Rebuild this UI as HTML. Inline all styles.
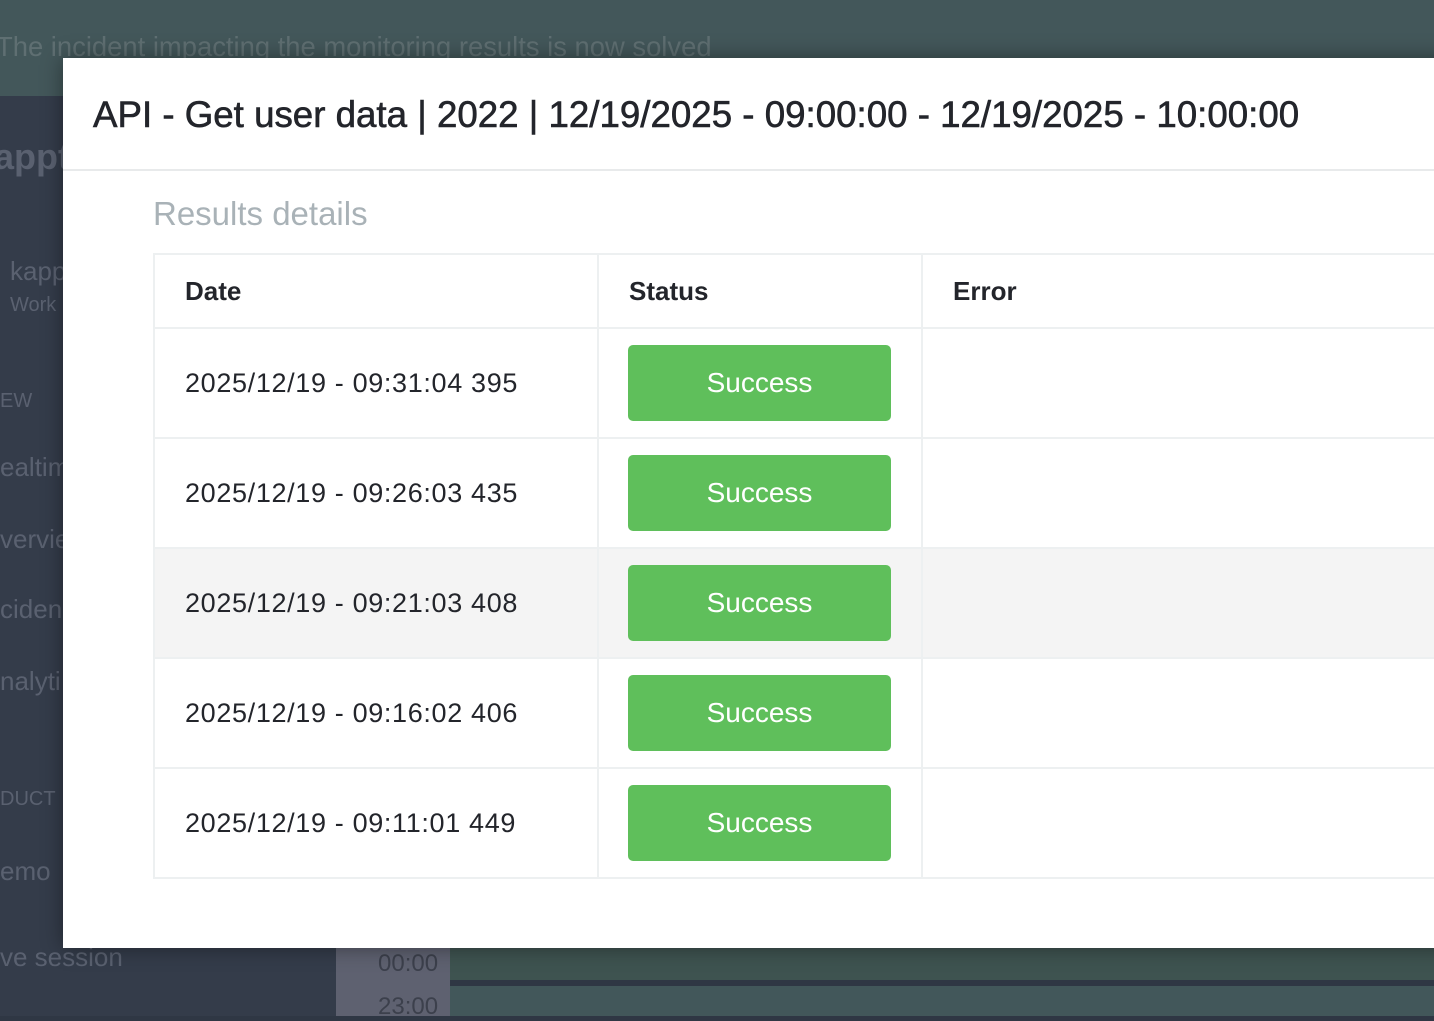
<!DOCTYPE html>
<html><head><meta charset="utf-8"><style>
*{margin:0;padding:0;box-sizing:border-box}
body{width:1434px;height:1016px;overflow:hidden;position:relative;font-family:"Liberation Sans",Arial,sans-serif;background:#2f3744}
.banner{position:absolute;left:0;top:0;width:1434px;height:96px;background:#43575a}
.banner span{position:absolute;left:-4px;top:31px;font-size:27.4px;color:#5f6f72;white-space:nowrap}
.side{position:absolute;left:0;top:96px;width:336px;height:920px;background:#343c4a;color:#5a6170}
.side div{position:absolute;left:0;font-size:26px}
.bot1{position:absolute;left:336px;top:948px;width:114px;height:68px;background:#5e6170}
.bot2{position:absolute;left:450px;top:948px;width:984px;height:32px;background:#3e5350}
.bot3{position:absolute;left:450px;top:986px;width:984px;height:30px;background:#42575a}
.t{position:absolute;left:378px;font-size:24px;color:#3c404c}
.modal{position:absolute;left:63px;top:58px;width:1400px;height:890px;background:#fff;box-shadow:0 0 20px rgba(0,0,0,.4)}
h1{position:absolute;left:30px;top:36px;font-size:36.7px;font-weight:normal;color:#23252b;white-space:nowrap;-webkit-text-stroke:0.6px #23252b}
.hr{position:absolute;left:0;top:111px;width:100%;height:2px;background:#e8eaeb}
.rd{position:absolute;left:90px;top:137px;font-size:33px;color:#a9b2b7;font-weight:300}
table{position:absolute;left:90px;top:195px;border-collapse:collapse;width:1400px}
td,th{border:2px solid #edf0f1;text-align:left;font-size:26px;color:#23252b}
th{height:74px;padding-left:30px;font-weight:bold}
td{height:110px;padding-left:30px;font-size:27px;letter-spacing:0.65px}
tr.g td{background:#f4f4f4}
.btn{width:263px;height:76px;background:#5fbf5b;border-radius:5px;color:#fff;text-align:center;line-height:76px;font-size:28px;letter-spacing:0;margin-left:-1px}
</style></head><body>
<div class="banner"><span>The incident impacting the monitoring results is now solved</span></div>
<div class="side">
<div style="top:40px;font-size:36px;font-weight:bold;left:-6px">appt</div>
<div style="top:160px;left:10px">kapp</div>
<div style="top:198px;left:10px;font-size:20px">Work</div>
<div style="top:294px;font-size:20px">EW</div>
<div style="top:356px">ealtim</div>
<div style="top:428px">vervie</div>
<div style="top:498px">ciden</div>
<div style="top:570px">nalyti</div>
<div style="top:692px;font-size:20px">DUCT</div>
<div style="top:760px">emo</div>
<div style="top:846px">ve session</div>
</div>
<div class="bot1"></div><div class="bot2"></div><div class="bot3"></div>
<div class="t" style="top:950px">00:00</div>
<div class="t" style="top:993px">23:00</div>
<div class="modal">
<h1>API - Get user data | 2022 | 12/19/2025 - 09:00:00 - 12/19/2025 - 10:00:00</h1>
<div class="hr"></div>
<div class="rd">Results details</div>
<table>
<tr><th style="width:444px">Date</th><th style="width:324px">Status</th><th>Error</th></tr>
<tr><td>2025/12/19 - 09:31:04 395</td><td><div class="btn">Success</div></td><td></td></tr>
<tr><td>2025/12/19 - 09:26:03 435</td><td><div class="btn">Success</div></td><td></td></tr>
<tr class="g"><td>2025/12/19 - 09:21:03 408</td><td><div class="btn">Success</div></td><td></td></tr>
<tr><td>2025/12/19 - 09:16:02 406</td><td><div class="btn">Success</div></td><td></td></tr>
<tr><td>2025/12/19 - 09:11:01 449</td><td><div class="btn">Success</div></td><td></td></tr>
</table>
</div>
</body></html>
